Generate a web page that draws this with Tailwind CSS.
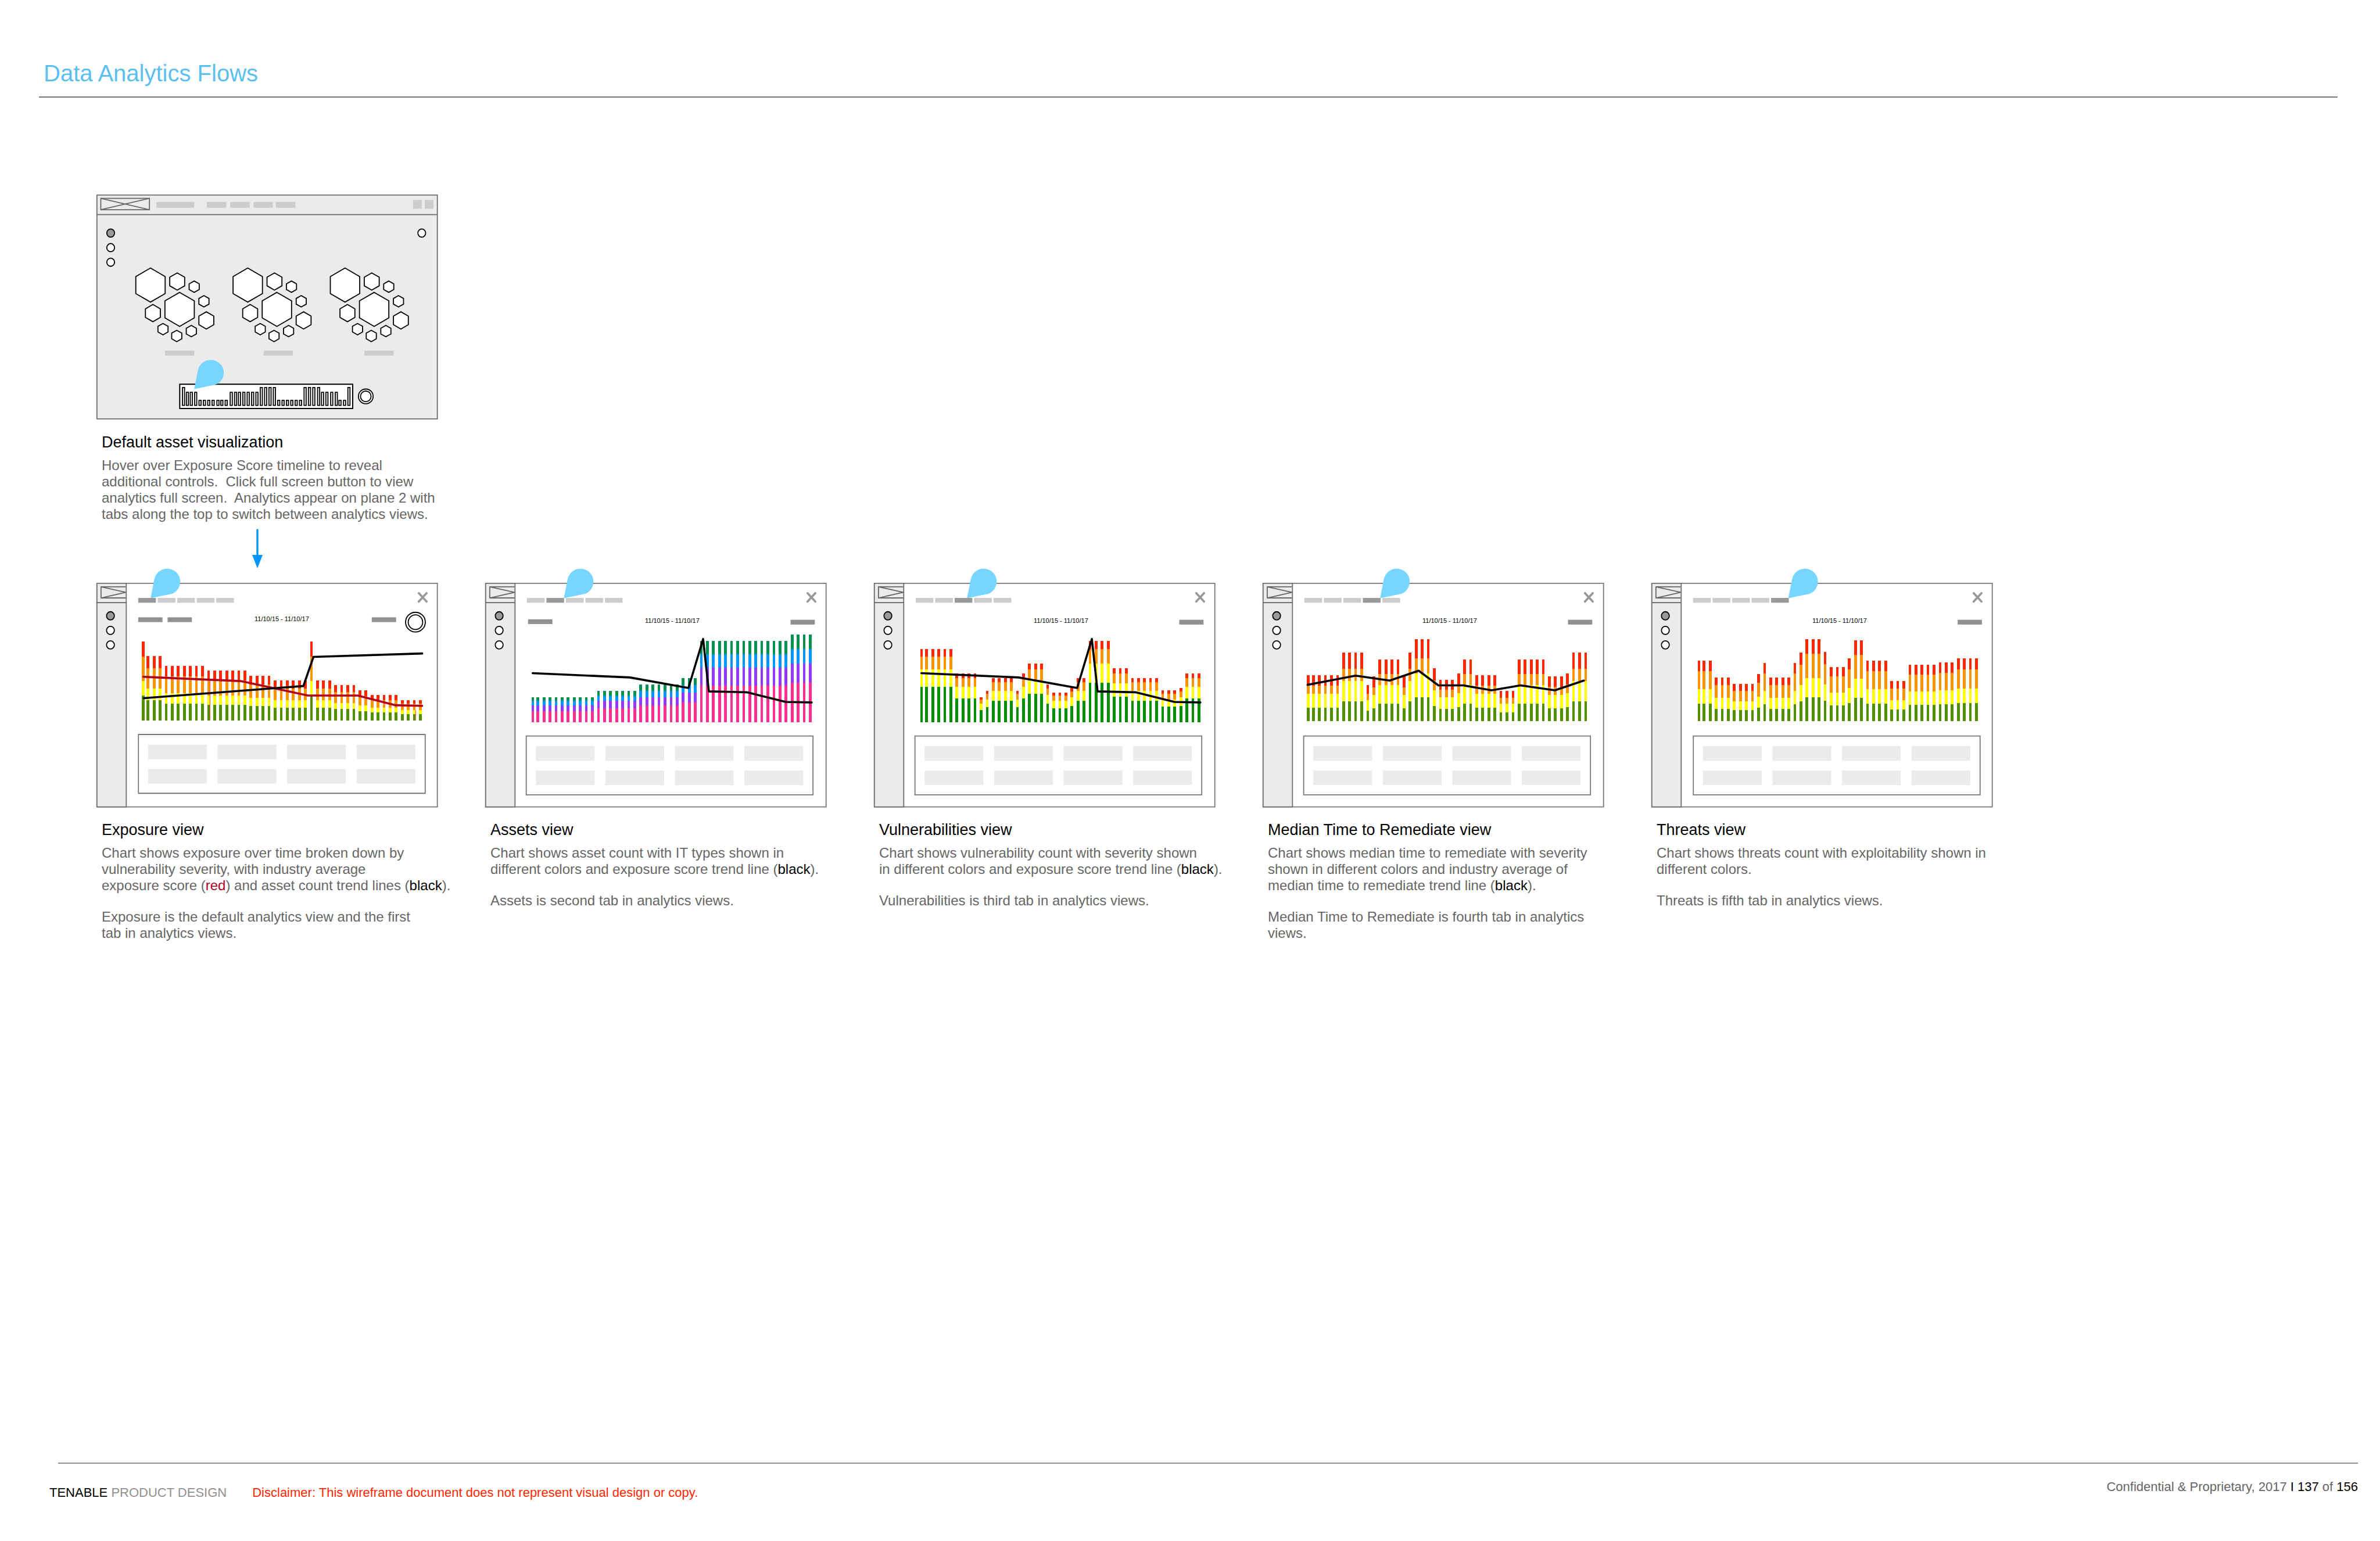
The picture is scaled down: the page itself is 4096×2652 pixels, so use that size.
<!DOCTYPE html>
<html lang="en">
<head>
<meta charset="utf-8">
<title>Data Analytics Flows</title>
<script src="https://cdn.jsdelivr.net/npm/@tailwindcss/browser@4"></script>
</head>
<body class="bg-white font-['Helvetica_Neue','Liberation_Sans',Arial,sans-serif] text-[#666]">
<div class="flex min-h-screen flex-col">
  <header class="mr-[73px] ml-[67px] border-b-2 border-[#777] pt-[102px] pb-4 pl-2">
    <h1 class="text-[40px] leading-12 text-[#5bc0f0]">Data Analytics Flows</h1>
  </header>

  <main class="pt-[167px] pr-[667px] pl-[166px]">
    <section class="grid grid-cols-5 gap-x-[82px]">
      <article>
        <svg id="overview" class="block w-full overflow-visible" viewBox="0 0 587 386" role="img" aria-label="Default asset visualization wireframe"></svg>
        <div class="pt-6 pl-[9px] whitespace-nowrap">
          <h2 class="text-[27px] leading-8 text-black">Default asset visualization</h2>
          <p class="mt-2.5 text-[24px] leading-7">Hover over Exposure Score timeline to reveal<br>additional controls.&nbsp; Click full screen button to view<br>analytics full screen.&nbsp; Analytics appear on plane 2 with<br>tabs along the top to switch between analytics views.</p>
        </div>
        <svg class="mt-[11px] ml-[268px] block h-[68px] w-[18px]" viewBox="0 0 18 68" aria-hidden="true">
          <path d="M9 2V48" stroke="#0096ff" stroke-width="3.4" stroke-linecap="round"/>
          <path d="M0 45H18L9 68Z" fill="#0096ff"/>
        </svg>
      </article>
    </section>

    <section class="mt-[25px] grid grid-cols-5 gap-x-[82px]">
      <article>
        <svg id="exposure" class="block w-full overflow-visible" viewBox="0 0 587 386" role="img" aria-label="Exposure view wireframe"></svg>
        <div class="pt-[23px] pl-[9px] whitespace-nowrap">
          <h2 class="text-[27px] leading-8 text-black">Exposure view</h2>
          <div class="mt-2.5 flex flex-col gap-[26px] text-[24px] leading-7">
            <p>Chart shows exposure over time broken down by<br>vulnerability severity, with industry average<br>exposure score (<span class="text-[#b0001e]">red</span>) and asset count trend lines (<span class="text-black">black</span>).</p>
            <p>Exposure is the default analytics view and the first<br>tab in analytics views.</p>
          </div>
        </div>
      </article>
      <article>
        <svg id="assets" class="block w-full overflow-visible" viewBox="0 0 587 386" role="img" aria-label="Assets view wireframe"></svg>
        <div class="pt-[23px] pl-[9px] whitespace-nowrap">
          <h2 class="text-[27px] leading-8 text-black">Assets view</h2>
          <div class="mt-2.5 flex flex-col gap-[26px] text-[24px] leading-7">
            <p>Chart shows asset count with IT types shown in<br>different colors and exposure score trend line (<span class="text-black">black</span>).</p>
            <p>Assets is second tab in analytics views.</p>
          </div>
        </div>
      </article>
      <article>
        <svg id="vulnerabilities" class="block w-full overflow-visible" viewBox="0 0 587 386" role="img" aria-label="Vulnerabilities view wireframe"></svg>
        <div class="pt-[23px] pl-[9px] whitespace-nowrap">
          <h2 class="text-[27px] leading-8 text-black">Vulnerabilities view</h2>
          <div class="mt-2.5 flex flex-col gap-[26px] text-[24px] leading-7">
            <p>Chart shows vulnerability count with severity shown<br>in different colors and exposure score trend line (<span class="text-black">black</span>).</p>
            <p>Vulnerabilities is third tab in analytics views.</p>
          </div>
        </div>
      </article>
      <article>
        <svg id="remediate" class="block w-full overflow-visible" viewBox="0 0 587 386" role="img" aria-label="Median Time to Remediate view wireframe"></svg>
        <div class="pt-[23px] pl-[9px] whitespace-nowrap">
          <h2 class="text-[27px] leading-8 text-black">Median Time to Remediate view</h2>
          <div class="mt-2.5 flex flex-col gap-[26px] text-[24px] leading-7">
            <p>Chart shows median time to remediate with severity<br>shown in different colors and industry average of<br>median time to remediate trend line (<span class="text-black">black</span>).</p>
            <p>Median Time to Remediate is fourth tab in analytics<br>views.</p>
          </div>
        </div>
      </article>
      <article>
        <svg id="threats" class="block w-full overflow-visible" viewBox="0 0 587 386" role="img" aria-label="Threats view wireframe"></svg>
        <div class="pt-[23px] pl-[9px] whitespace-nowrap">
          <h2 class="text-[27px] leading-8 text-black">Threats view</h2>
          <div class="mt-2.5 flex flex-col gap-[26px] text-[24px] leading-7">
            <p>Chart shows threats count with exploitability shown in<br>different colors.</p>
            <p>Threats is fifth tab in analytics views.</p>
          </div>
        </div>
      </article>
    </section>
  </main>

  <footer class="mt-auto h-[135px] pr-[38px] pl-[85px] text-[22px] leading-7">
    <div class="ml-[15px] border-t-2 border-[#919191]"></div>
    <div class="flex items-start justify-between">
      <div class="flex gap-[44px] pt-9">
        <p class="text-[#919191]"><span class="text-black">TENABLE</span> PRODUCT DESIGN</p>
        <p class="text-[#ff2600]">Disclaimer: This wireframe document does not represent visual design or copy.</p>
      </div>
      <p class="pt-[26px]">Confidential &amp; Proprietary, 2017 <span class="text-black">I 137</span> of <span class="text-black">156</span></p>
    </div>
  </footer>
</div>

<script>
const LINE = 'vector-effect="non-scaling-stroke"';
const rect = (x, y, w, h, fill, stroke = 'none', sw = 1.8) =>
  `<rect x="${x}" y="${y}" width="${w}" height="${h}" fill="${fill}" stroke="${stroke}" stroke-width="${sw}" ${LINE}/>`;
const segment = (x, y, w, h, fill) =>
  `<rect x="${x}" y="${y}" width="${w}" height="${h}" fill="${fill}" shape-rendering="crispEdges"/>`;
const oval = (x, y, rx, ry, fill) =>
  `<ellipse cx="${x}" cy="${y}" rx="${rx}" ry="${ry}" fill="${fill}" stroke="#000" stroke-width="1.8" ${LINE}/>`;
const path = (d, color, sw, cap = 'butt') =>
  `<path d="${d}" fill="none" stroke="${color}" stroke-width="${sw}" stroke-linecap="${cap}" stroke-linejoin="round" ${LINE}/>`;
const pin = (x, y) =>
  `<path transform="translate(${x} ${y})" d="M0 0L16 -114C22 -154 44 -180 72 -180C104 -180 129 -145 129 -102C129 -68 114 -37 92 -27Z" fill="#76d6ff"/>`;

// Overview: header bar, hexagon clusters, score timeline
function overview() {
  let s = rect(42, 62.5, 1484, 1381, '#ebebeb', '#6b6b6b') + path('M42 183H1526', '#6b6b6b', 1.8);
  s += rect(59, 83, 212, 70, 'none', '#666') + path('M59 83L271 153M271 83L59 153', '#666', 1.8);
  for (const [x, w] of [[301, 165], [521, 85], [623, 85], [725, 84], [822, 85]]) s += rect(x, 105, w, 36, '#ccc');
  s += rect(1420, 93, 38, 54, '#ccc') + rect(1471, 93, 38, 54, '#ccc');
  s += oval(102, 297, 17, 25, '#999') + oval(102, 387, 17, 25, '#fff') + oval(102, 477, 17, 25, '#fff') + oval(1458, 297, 17, 25, '#fff');
  const hexes = [[275.5, 618, 64, 105], [402.5, 768, 64, 105], [392, 596, 32.5, 53], [286, 791, 32.5, 53], [519, 836, 32.5, 53],
    [466, 628, 22, 35], [508.5, 718, 22, 35], [330, 890, 22, 35], [390, 932, 22, 35], [453.5, 902, 22, 35]];
  for (const dx of [0, 424, 848])
    for (const [x, y, w, h] of hexes)
      s += `<path d="M${x + dx} ${y - h}l${w} ${h / 2}v${h}l${-w} ${h / 2}l${-w} ${-h / 2}v${-h}z" fill="#fff" stroke="#000" stroke-width="1.8" ${LINE}/>`;
  for (const x of [339, 769, 1208]) s += rect(x, 1023, 127, 30, '#ccc');
  s += rect(403, 1230, 754, 150, '#fff', '#000', 2);
  const tops = { t: 1250, m: 1280, s: 1329 };
  const bars = { t: [415, 754, 773, 792, 811, 945, 964, 983, 1004, 1136],
    m: [432, 449, 468, 623, 642, 659, 678, 697, 716, 735, 1021, 1040, 1061, 1081],
    s: [487, 506, 525, 544, 565, 582, 601, 830, 849, 868, 887, 906, 925, 1097, 1117] };
  for (const k in bars) for (const x of bars[k]) s += rect(x, tops[k], 9, 1360 - tops[k], '#fff', '#000');
  s += oval(1214, 1305, 32, 45.5, '#fff') + oval(1214, 1305, 23, 33, '#fff') + pin(466, 1260);
  document.getElementById('overview').innerHTML = `<g transform="scale(.39482 .27887) translate(-40 -60)">${s}</g>`;
}

// Analytics screens. runs: [bar count, tops of the four stacked segments]
const SEVERITY = ['#ff2600', '#ff9300', '#ffff00', '#4f8f00'];
const SCORE = 'M247 695L671 721L926 785L990 487L1015 806L1180 811L1350 870L1463 873';
const screens = [
  { id: 'exposure', tab: 0, tip: 276, panel: [223, 1068], date: [730, 378], x: 237, base: 982, colors: SEVERITY,
    pills: [[222, 355], [350, 355], [1240, 355]], dial: true,
    runs: [[1,503,595,743,831],[3,592,666,787,861],[7,651,716,817,879],[7,680,740,831,888],[4,710,764,846,896],[6,740,787,861,905],[1,503,595,743,831],[3,740,787,861,905],[4,769,811,876,914],[2,799,835,891,926],[5,828,858,905,935],[4,858,882,920,944]],
    hair: [[534, 740], [1430, 920]],
    lines: [['M244 717L668 743L962 831L1179 831L1344 890L1460 894', '#b0001e'], ['M247 847L942 773L986 596L1460 575', '#000']] },
  { id: 'assets', tab: 1, tip: 383, panel: [219, 1077], date: [736, 390], x: 242, base: 994, colors: ['#009051', '#0096ff', '#9437ff', '#ff2f92'],
    pills: [[227, 367], [1371, 370]],
    runs: [[11,840,864,891,926],[7,802,834,864,908],[7,763,802,840,891],[3,725,769,814,873],[15,497,580,663,772],[4,459,547,636,754]],
    lines: [[SCORE, '#000']] },
  { id: 'vulnerabilities', tab: 2, tip: 446, panel: [219, 1077], date: [736, 390], x: 242, base: 994, colors: ['#ff2600', '#ff9300', '#ffff00', '#008f00'],
    pills: [[1371, 370]],
    runs: [[6,547,595,672,778],[4,695,725,778,849],[1,840,855,882,920],[1,802,820,855,902],[4,725,751,802,864],[1,802,820,855,902],[1,695,725,778,849],[3,636,672,738,822],[1,763,787,828,882],[3,814,831,864,908],[1,784,805,843,893],[2,725,751,802,864],[4,497,547,636,754],[3,666,698,757,837],[5,725,751,802,864],[3,799,820,855,899],[1,784,805,843,893],[3,695,725,778,849]],
    lines: [[SCORE, '#000']] },
  { id: 'remediate', tab: 3, tip: 552, panel: [219, 1077], date: [736, 390], x: 233, base: 985, colors: SEVERITY,
    pills: [[1371, 370]],
    runs: [[6,707,772,822,905],[4,571,669,743,867],[1,769,822,861,923],[1,716,781,828,908],[4,612,701,766,879],[1,716,781,828,908],[1,571,669,743,867],[3,488,606,695,843],[1,666,740,799,893],[3,737,796,840,914],[1,695,763,817,902],[2,612,701,766,879],[4,707,772,822,905],[3,802,846,879,932],[5,612,701,766,879],[3,716,778,828,908],[1,695,763,817,902],[3,571,669,743,867]],
    lines: [['M236 766L445 710L594 740L720 680L806 769L914 769L1038 799L1164 769L1314 799L1440 740', '#000']] },
  { id: 'threats', tab: 4, tip: 637, panel: [223, 1077], date: [741, 390], x: 242, base: 985, colors: SEVERITY,
    pills: [[1375, 370]],
    runs: [[3,618,683,793,882],[3,722,769,846,911],[4,760,802,867,920],[1,701,754,837,905],[1,633,695,802,885],[4,722,769,846,911],[1,633,695,802,885],[1,571,645,769,867],[3,488,577,725,843],[1,565,639,763,864],[3,657,716,814,891],[1,604,672,784,876],[2,494,583,728,846],[4,618,683,793,882],[3,743,787,858,917],[5,642,704,805,888],[3,630,692,799,885],[4,604,672,787,876]],
    lines: [] },
];

function screen(c) {
  let s = rect(42, 148, 1484, 1361, '#fff', '#777') + rect(42, 148, 128, 1361, '#ebebeb', '#6e6e6e');
  s += path('M42 266H170M168 169H60V237H168M60 169L168 203L60 237', '#666', 1.8);
  s += oval(101, 346, 17, 25, '#999') + oval(101, 434.5, 17, 25, '#fff') + oval(101, 523, 17, 25, '#fff');
  for (let i = 0; i < 5; i++) s += rect(222 + 85 * i, 237, 77, 29, i === c.tab ? '#999' : '#ccc');
  for (const [x, y] of c.pills) s += rect(x, y, 106, 29, '#919191');
  s += path('M1445 208L1479 259M1479 208L1445 259', '#999', 3.8, 'round');
  if (c.dial) s += oval(1430.5, 384.5, 43, 60, '#fff') + oval(1430.5, 384.5, 31.5, 44.5, '#fff');
  let i = 0;
  for (const [n, ...tops] of c.runs)
    for (let k = 0; k < n; k++, i++) {
      const x = i ? c.x - 4.5 + 26.38 * i : c.x;
      tops.forEach((y, j) => { s += segment(x, y, 12, (tops[j + 1] ?? c.base) - y, c.colors[j]); });
    }
  for (const [x, y] of c.hair ?? []) s += rect(x, y, 2, c.base - y, '#ff2600');
  for (const [d, color] of c.lines) s += path(d, color, 3.6, 'round');
  const [px, py] = c.panel;
  s += rect(px, py, 1250, 358, '#fff', '#777');
  for (let r = 0; r < 2; r++) for (let k = 0; k < 4; k++) s += rect(px + 42 + 303 * k, py + 62 + 148 * r, 256, 89, '#ebebeb');
  s += pin(c.tip, 239);
  const [dx, dy] = c.date;
  document.getElementById(c.id).innerHTML =
    `<g transform="scale(.39482 .28278) translate(-40 -145)">${s}</g>` +
    `<text x="${Math.round((dx - 40) * .39482)}" y="${Math.round((dy - 145) * .28278)}" font-size="11" fill="#000">11/10/15 - 11/10/17</text>`;
}

overview();
screens.forEach(screen);
</script>
</body>
</html>
